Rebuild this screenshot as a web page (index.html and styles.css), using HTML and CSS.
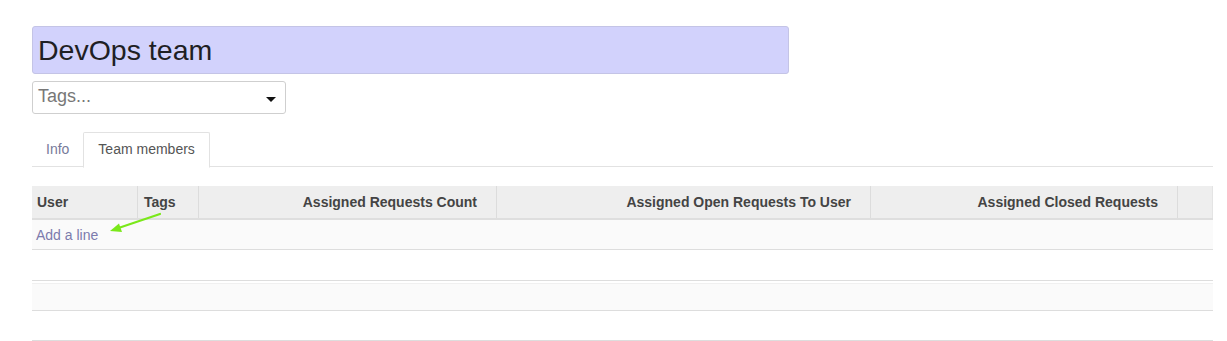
FILE: index.html
```html
<!DOCTYPE html>
<html>
<head>
<meta charset="utf-8">
<link rel="stylesheet" href="styles.css">
</head>
<body>
<div class="page">
  <div class="title-input">DevOps team</div>
  <div class="tags-input">
    <span class="placeholder">Tags...</span>
    <span class="caret"></span>
  </div>
  <div class="tabs">
    <div class="tab">Info</div>
    <div class="tab active">Team members</div>
  </div>
  <div class="table-wrap">
    <div class="thead">
      <div class="th c-user">User</div>
      <div class="th c-tags">Tags</div>
      <div class="th c-num c-a">Assigned Requests Count</div>
      <div class="th c-num c-b">Assigned Open Requests To User</div>
      <div class="th c-num c-c">Assigned Closed Requests</div>
      <div class="th c-end"></div>
    </div>
    <div class="row odd short"><span class="add-line">Add a line</span></div>
    <div class="row"></div>
    <div class="row odd short inner"></div>
    <div class="row short"></div>
    <svg class="arrow" width="60" height="24" viewBox="0 0 60 24">
      <line x1="53" y1="2" x2="10" y2="16.5" stroke="#7ae81a" stroke-width="2.2" stroke-linecap="round"/>
      <polygon points="3,19 12,11.5 15,20" fill="#7ae81a"/>
    </svg>
  </div>
</div>
</body>
</html>
```
FILE: styles.css
```css
html, body {
  margin: 0;
  padding: 0;
  background: #fff;
}
body {
  font-family: "Liberation Sans", Arial, sans-serif;
  color: #333;
}
.page {
  padding: 26px 14px 0 32px;
}
.title-input {
  box-sizing: border-box;
  width: 757px;
  height: 48px;
  background: #d2d2fc;
  border: 1px solid #c4c4e6;
  border-radius: 3px;
  font-size: 28.5px;
  line-height: 46px;
  padding-left: 5px;
  color: #1f1f24;
}
.tags-input {
  box-sizing: border-box;
  margin-top: 7px;
  width: 254px;
  height: 33px;
  border: 1px solid #cfcfcf;
  border-radius: 3px;
  display: flex;
  align-items: center;
  justify-content: space-between;
  padding: 0 9px 0 5px;
}
.placeholder {
  font-size: 18px;
  color: #777;
  margin-top: -2px;
}
.caret {
  width: 0;
  height: 0;
  border-left: 5px solid transparent;
  border-right: 5px solid transparent;
  border-top: 5px solid #111;
  margin-top: 4px;
}
.tabs {
  margin-top: 18px;
  display: flex;
  border-bottom: 1px solid #e2e2e2;
  height: 34px;
  width: 1181px;
  font-size: 14px;
}
.tab {
  padding: 0 14px;
  line-height: 34px;
  color: #777a9a;
}
.tab.active {
  color: #555;
  background: #fff;
  border: 1px solid #e2e2e2;
  border-bottom-color: #fff;
  border-radius: 2px 2px 0 0;
  height: 34px;
  line-height: 32px;
  padding: 0 14px 0 14px;
}
.table-wrap {
  position: relative;
  margin-top: 19px;
  width: 1181px;
}
.thead {
  display: flex;
  height: 32px;
  background: #eee;
  border-bottom: 2px solid #dedede;
  font-size: 14px;
  font-weight: bold;
  color: #444;
}
.th {
  box-sizing: border-box;
  line-height: 32px;
  border-right: 1px solid #dcdcdc;
  white-space: nowrap;
}
.c-user { width: 106px; padding-left: 5px; }
.c-tags { width: 61px; padding-left: 6px; }
.c-num { text-align: right; padding-right: 19px; }
.c-a { width: 298px; }
.c-b { width: 374px; }
.c-c { width: 307px; }
.c-end { width: 35px; border-right: 1px solid #e4e4e4; }
.row {
  height: 30px;
  border-bottom: 1px solid #dddddd;
  background: #fff;
  display: flex;
  align-items: center;
}
.row.short {
  height: 29px;
}
.row.odd {
  background: #fafafa;
}
.row.inner {
  box-shadow: inset 0 2px 0 #fff, inset 0 3px 0 #f0f0f0;
}
.add-line {
  font-size: 14px;
  color: #7c7bad;
  padding-left: 4px;
}
.arrow {
  position: absolute;
  left: 75px;
  top: 26px;
}
```
